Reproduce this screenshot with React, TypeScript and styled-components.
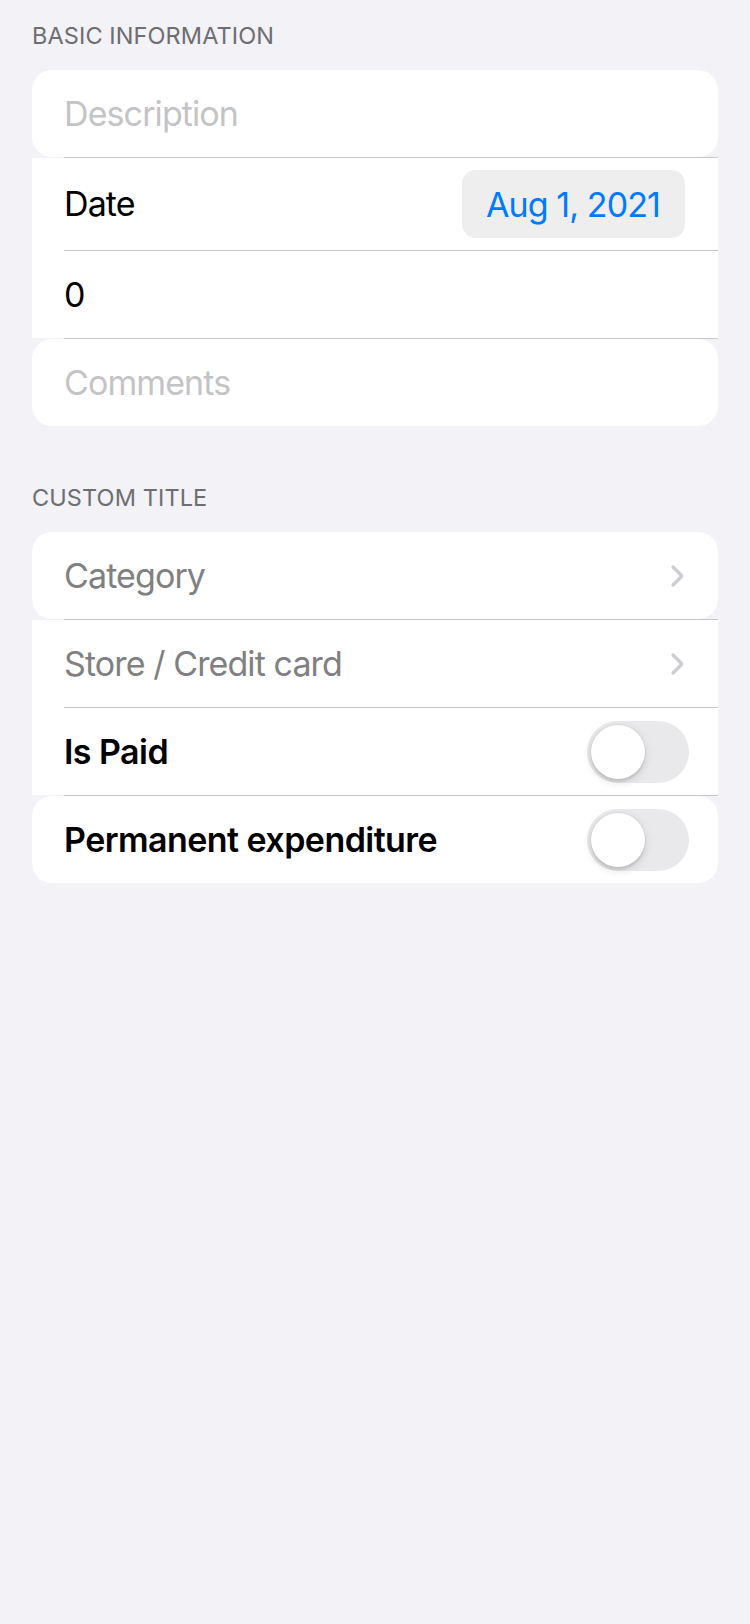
import React, { useState } from "react";
import styled, { createGlobalStyle } from "styled-components";

const colors = {
  background: "#f2f2f7",
  card: "#ffffff",
  header: "#6d6d72",
  separator: "#c6c6c8",
  placeholder: "#c4c4c6",
  muted: "#808082",
  chevron: "#cdcdd1",
  accent: "#007aff",
  pill: "#eeeeef",
  track: "#e9e9eb",
};

const GlobalStyle = createGlobalStyle`
  html, body {
    margin: 0;
    padding: 0;
    background: ${colors.background};
  }
  body {
    font-family: Inter, "Noto Sans", "DejaVu Sans", sans-serif;
    -webkit-font-smoothing: antialiased;
  }
  * {
    box-sizing: border-box;
  }
`;

const Page = styled.div`
  min-height: 1624px;
  padding: 21px 32px 0;
  background: ${colors.background};
`;

const Section = styled.section`
  display: flex;
  flex-direction: column;
  & + & {
    margin-top: 57px;
  }
`;

const SectionHeader = styled.h3`
  margin: 0 0 19px;
  font-size: 23.5px;
  line-height: 30px;
  font-weight: 400;
  letter-spacing: 0.1px;
  color: ${colors.header};
  text-transform: uppercase;
`;

const Group = styled.div`
  display: flex;
  flex-direction: column;
`;

const Row = styled.div<{ $rounded?: boolean; $tall?: boolean }>`
  display: flex;
  align-items: center;
  justify-content: space-between;
  min-height: ${(p) => (p.$tall ? "92px" : "87px")};
  padding: 0 32px;
  background: ${colors.card};
  border-radius: ${(p) => (p.$rounded ? "20px" : "0")};
`;

const Divider = styled.div<{ $filled?: boolean }>`
  height: 1px;
  padding-left: 32px;
  background: ${(p) => (p.$filled ? colors.card : "transparent")};

  &::after {
    content: "";
    display: block;
    height: 1px;
    background: ${colors.separator};
  }
`;

const Field = styled.input`
  flex: 1;
  min-width: 0;
  border: none;
  outline: none;
  padding: 0;
  background: transparent;
  font-family: inherit;
  font-size: 34px;
  line-height: 42px;
  letter-spacing: -0.9px;
  color: #000;

  &::placeholder {
    color: ${colors.placeholder};
  }
`;

const Label = styled.span<{ $tone?: "plain" | "muted" | "strong" }>`
  font-size: 34px;
  line-height: 42px;
  letter-spacing: ${(p) => (p.$tone === "strong" ? "-0.55px" : "-0.9px")};
  font-weight: ${(p) => (p.$tone === "strong" ? 600 : 400)};
  color: ${(p) => (p.$tone === "muted" ? colors.muted : "#000")};
`;

const DatePill = styled.button`
  height: 68px;
  margin-right: 1px;
  padding: 0 25px 0 24px;
  border: none;
  border-radius: 14px;
  background: ${colors.pill};
  font-family: inherit;
  font-size: 34px;
  letter-spacing: -0.9px;
  color: ${colors.accent};
  cursor: pointer;
`;

const Chevron = styled.svg`
  width: 15px;
  height: 24px;
  flex: none;
  margin-right: 1px;
`;

const SwitchTrack = styled.button<{ $on: boolean }>`
  position: relative;
  width: 102px;
  height: 62px;
  margin-right: -3px;
  padding: 0;
  border: none;
  border-radius: 31px;
  background: ${(p) => (p.$on ? "#34c759" : colors.track)};
  cursor: pointer;
  transition: background 0.2s;
`;

const SwitchKnob = styled.span<{ $on: boolean }>`
  position: absolute;
  top: 4px;
  left: ${(p) => (p.$on ? "44px" : "4px")};
  width: 54px;
  height: 54px;
  border-radius: 50%;
  background: #fff;
  box-shadow: 0 0 0 1px rgba(0, 0, 0, 0.04), 0 3px 8px rgba(0, 0, 0, 0.15),
    0 3px 1px rgba(0, 0, 0, 0.06);
  transition: left 0.2s;
`;

const ChevronIcon = () => (
  <Chevron viewBox="0 0 15 24" fill="none">
    <polyline
      points="3,3 12,12 3,21"
      stroke={colors.chevron}
      strokeWidth="3.2"
      strokeLinecap="round"
      strokeLinejoin="round"
    />
  </Chevron>
);

const Toggle: React.FC<{ value: boolean; onChange: (v: boolean) => void }> = ({
  value,
  onChange,
}) => (
  <SwitchTrack $on={value} onClick={() => onChange(!value)}>
    <SwitchKnob $on={value} />
  </SwitchTrack>
);

const App: React.FC = () => {
  const [isPaid, setIsPaid] = useState(false);
  const [permanent, setPermanent] = useState(false);

  return (
    <>
      <GlobalStyle />
      <Page>
        <Section>
          <SectionHeader>Basic Information</SectionHeader>
          <Group>
            <Row $rounded>
              <Field placeholder="Description" />
            </Row>
            <Divider />
            <Row $tall>
              <Label>Date</Label>
              <DatePill>Aug 1, 2021</DatePill>
            </Row>
            <Divider $filled />
            <Row>
              <Field defaultValue="0" />
            </Row>
            <Divider />
            <Row $rounded>
              <Field placeholder="Comments" />
            </Row>
          </Group>
        </Section>

        <Section>
          <SectionHeader>Custom Title</SectionHeader>
          <Group>
            <Row $rounded>
              <Label $tone="muted">Category</Label>
              <ChevronIcon />
            </Row>
            <Divider />
            <Row>
              <Label $tone="muted">Store / Credit card</Label>
              <ChevronIcon />
            </Row>
            <Divider $filled />
            <Row>
              <Label $tone="strong">Is Paid</Label>
              <Toggle value={isPaid} onChange={setIsPaid} />
            </Row>
            <Divider />
            <Row $rounded>
              <Label $tone="strong">Permanent expenditure</Label>
              <Toggle value={permanent} onChange={setPermanent} />
            </Row>
          </Group>
        </Section>
      </Page>
    </>
  );
};

export default App;
